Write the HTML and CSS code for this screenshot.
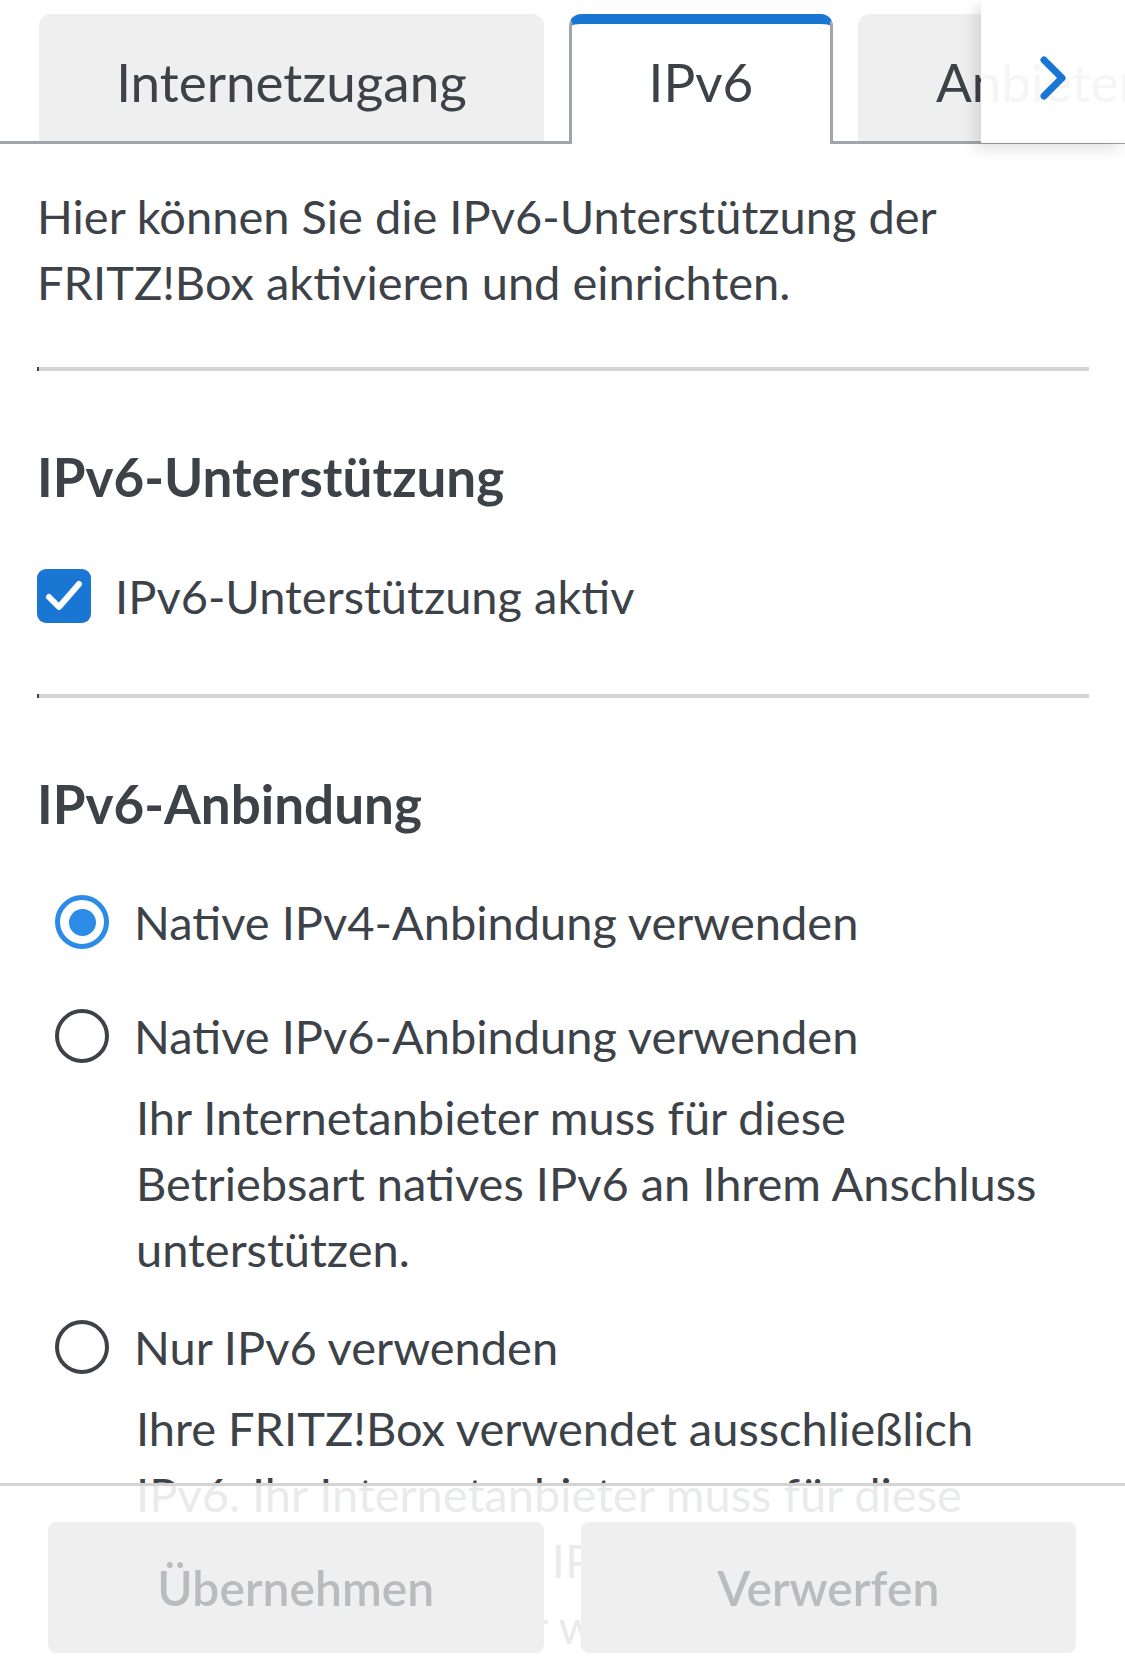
FILE: index.html
```html
<!DOCTYPE html>
<html lang="de">
<head>
    <meta charset="UTF-8">
    <title>IPv6</title>
    <link rel="stylesheet" href="styles.css">
</head>
<body>
    <div class="tabbar">
        <div class="tabs">
            <div class="tab">Internetzugang</div>
            <div class="tab active">IPv6</div>
            <div class="tab">Anbieter-Dienste</div>
        </div>
        <div class="tab-more">
            <svg width="26" height="44" viewBox="0 0 26 44">
                <polyline points="4,4 22,22 4,40" fill="none" stroke="#1976d2" stroke-width="7" stroke-linecap="round" stroke-linejoin="round"/>
            </svg>
        </div>
    </div>

    <main class="content">
        <p class="intro">Hier können Sie die IPv6-Unterstützung der FRITZ!Box aktivieren und einrichten.</p>

        <div class="divider"></div>

        <h2>IPv6-Unterstützung</h2>
        <label class="check-row">
            <span class="checkbox">
                <svg width="54" height="54" viewBox="0 0 54 54">
                    <polyline points="12,28 22,38 42,15" fill="none" stroke="#fff" stroke-width="6" stroke-linecap="round" stroke-linejoin="round"/>
                </svg>
            </span>
            IPv6-Unterstützung aktiv
        </label>

        <div class="divider"></div>

        <h2>IPv6-Anbindung</h2>
        <div class="options">
            <div class="option plain">
                <div class="radio-row"><span class="radio checked"></span>Native IPv4-Anbindung verwenden</div>
            </div>
            <div class="option">
                <div class="radio-row"><span class="radio"></span>Native IPv6-Anbindung verwenden</div>
                <p class="desc">Ihr Internetanbieter muss für diese Betriebsart natives IPv6 an Ihrem Anschluss unterstützen.</p>
            </div>
            <div class="option">
                <div class="radio-row"><span class="radio"></span>Nur IPv6 verwenden</div>
                <p class="desc">Ihre FRITZ!Box verwendet ausschließlich IPv6. Ihr Internetanbieter muss für diese Betriebsart generell IPv6 an Ihrem Anschluss unterstützen. Daher wird IPv4 nur über einen Tunnel übertragen.</p>
            </div>
        </div>
    </main>

    <footer class="actions">
        <button class="btn" disabled>Übernehmen</button>
        <button class="btn" disabled>Verwerfen</button>
    </footer>
</body>
</html>
```

FILE: styles.css
```css
body {
    margin: 0;
    font-family: Lato, "Noto Sans", sans-serif;
    color: #3c4248;
    background-color: #fff;
    overflow: hidden;
}
.tabbar {
    position: relative;
}
.tabs {
    display: flex;
    align-items: flex-start;
    gap: 25px;
    height: 130px;
    padding: 14px 0 0 39px;
    background: linear-gradient(#a1a5a9, #a1a5a9) left bottom / 100% 3px no-repeat;
    overflow: hidden;
    white-space: nowrap;
}
.tab {
    flex: none;
    box-sizing: border-box;
    height: 127px;
    padding: 35px 78px 0;
    background-color: #efefef;
    border-radius: 12px 12px 0 0;
    font-size: 53px;
    line-height: 66px;
}
.tab:first-child {
    width: 505px;
    text-align: center;
    padding: 35px 0 0;
}
.tab.active {
    height: 130px;
    min-width: 264px;
    text-align: center;
    padding: 25px 20px 0;
    background-color: #fff;
    border: 3px solid #a1a5a9;
    border-top: 10px solid #1976d2;
    border-bottom: 0;
}
.tab-more {
    position: absolute;
    top: 0;
    right: 0;
    width: 144px;
    height: 143px;
    box-sizing: border-box;
    padding-top: 12px;
    display: flex;
    align-items: center;
    justify-content: center;
    background-color: rgba(255, 255, 255, 0.95);
    box-shadow: -6px 6px 14px rgba(0, 0, 0, 0.12);
}
.content {
    padding: 39px 36px 0 37px;
    font-size: 47px;
    line-height: 66px;
}
.intro {
    margin: 0;
}
.divider {
    height: 4px;
    margin-top: 52px;
    background-color: #d5d5d5;
    border-left: 2px solid #3c4248;
}
.content h2 {
    margin: 73px 0 0;
    font-size: 53px;
    font-weight: 700;
    line-height: 66px;
}
.check-row {
    display: flex;
    align-items: center;
    gap: 24px;
    margin-top: 53px;
    margin-bottom: 65px;
}
.checkbox {
    display: flex;
    width: 54px;
    height: 54px;
    border-radius: 9px;
    background-color: #1976d2;
}
.options {
    display: flex;
    flex-direction: column;
    gap: 32px;
    margin-top: 52px;
}
.option.plain {
    padding-bottom: 16px;
}
.radio-row {
    display: flex;
    align-items: center;
    gap: 25px;
    padding-left: 18px;
}
.radio {
    flex: none;
    display: flex;
    align-items: center;
    justify-content: center;
    box-sizing: border-box;
    width: 54px;
    height: 54px;
    border: 4px solid #3c4248;
    border-radius: 50%;
}
.radio.checked {
    border: 5px solid #2b8be6;
}
.radio.checked::after {
    content: "";
    width: 27px;
    height: 27px;
    border-radius: 50%;
    background-color: #2b8be6;
}
.desc {
    margin: 15px 30px 0 99px;
}
.actions {
    position: fixed;
    left: 0;
    right: 0;
    bottom: 0;
    height: 185px;
    box-sizing: border-box;
    display: flex;
    gap: 37px;
    padding: 36px 49px 15px 48px;
    border-top: 3px solid #d4d4d4;
    background-color: rgba(255, 255, 255, 0.89);
}
.btn {
    flex: 1;
    border: 0;
    border-radius: 8px;
    background-color: #efefef;
    color: #b9bcbf;
    font-family: Lato, "Noto Sans", sans-serif;
    font-size: 48px;
    font-weight: 600;
}
```
